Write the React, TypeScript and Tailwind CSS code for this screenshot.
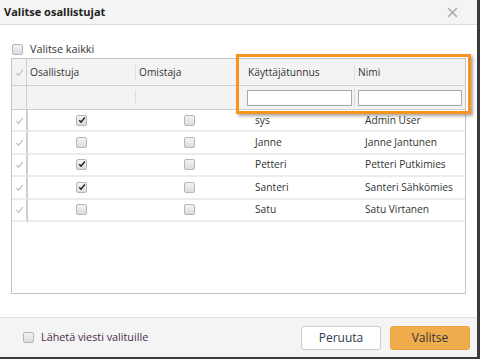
import React from "react";

const Check = ({ checked }: { checked?: boolean }) => (
  <span className="relative inline-block w-[11px] h-[11px] rounded-[2px] border border-[#b5b5b5] bg-gradient-to-b from-[#f4f4f4] to-[#dcdcdc]">
    {checked && (
      <svg viewBox="0 0 10 10" className="absolute left-[1px] top-[0px] w-[8px] h-[8px]">
        <path d="M1.5 5.2 L3.8 7.6 L8.5 1.8" stroke="#222" strokeWidth="1.8" fill="none" />
      </svg>
    )}
  </span>
);

const Tick = () => (
  <svg viewBox="0 0 10 10" className="w-[9px] h-[9px]">
    <path d="M1.5 5.5 L4 8 L8.8 2" stroke="#c4c4c4" strokeWidth="1.5" fill="none" />
  </svg>
);

const rows = [
  { o: true, u: "sys", n: "Admin User" },
  { o: false, u: "Janne", n: "Janne Jantunen" },
  { o: true, u: "Petteri", n: "Petteri Putkimies" },
  { o: true, u: "Santeri", n: "Santeri Sähkömies" },
  { o: false, u: "Satu", n: "Satu Virtanen" },
];

export default function App() {
  return (
    <div
      className="w-[480px] h-[359px] bg-[#3a3a3a] overflow-hidden text-[10.2px] text-[#222]"
      style={{ fontFamily: '"Open Sans", "Noto Sans", sans-serif' }}
    >
      <div className="w-[477px] h-[357px] bg-white flex flex-col">
        {/* header */}
        <div className="h-[25px] shrink-0 bg-[#f3f4f3] border-b border-[#dcdcdc] flex items-center justify-between pl-[4px] pr-[19px]">
          <span className="font-bold text-[11px] text-[#222]">Valitse osallistujat</span>
          <svg viewBox="0 0 10 10" className="w-[11px] h-[11px]">
            <path d="M1 1 L9 9 M9 1 L1 9" stroke="#b0b0b0" strokeWidth="1.4" />
          </svg>
        </div>

        {/* body */}
        <div className="flex-1 flex flex-col pl-[11px] pr-[11px]">
          <label className="flex items-center gap-[7px] mt-[18px] h-[12px] pl-[1px]">
            <Check />
            <span className="text-[#333] text-[10.8px]">Valitse kaikki</span>
          </label>

          <div className="relative mt-[3px] w-[455px] h-[236px] border border-[#c3c3c3]">
            {/* header row */}
            <div className="grid grid-cols-[15px_108px_105px_114px_1fr] h-[27px] bg-[#f3f3f3] border-b border-[#cfcfcf]">
              <div className="border-r border-[#cfcfcf] flex items-center justify-center">
                <Tick />
              </div>
              <div className="flex items-center pl-[3px] text-[#333]">Osallistuja</div>
              <div className="flex items-center pl-[3px] text-[#333] border-l border-[#dedede] my-[6px]">Omistaja</div>
              <div className="flex items-center pl-[8px] text-[#333]">Käyttäjätunnus</div>
              <div className="flex items-center pl-[3px] text-[#333] border-l border-[#dedede] my-[6px]">Nimi</div>
            </div>
            {/* filter row */}
            <div className="grid grid-cols-[15px_108px_105px_114px_1fr] h-[24px] bg-[#f3f3f3] border-b border-[#cfcfcf]">
              <div className="border-r border-[#cfcfcf]" />
              <div />
              <div className="border-l border-[#dedede] my-[5px]" />
              <div className="flex items-center pl-[7px] pr-[2px]">
                <div className="w-full h-[16px] bg-white border border-[#a9a9a9]" />
              </div>
              <div className="flex items-center pl-[3px] pr-[3px] border-l border-[#dedede] my-[3px]">
                <div className="w-full h-[16px] bg-white border border-[#a9a9a9]" />
              </div>
            </div>
            {/* data rows */}
            {rows.map((r) => (
              <div
                key={r.u}
                className="grid grid-cols-[15px_108px_105px_114px_1fr] h-[22.4px] border-b-2 border-[#ececec]"
              >
                <div className="border-r border-[#cfcfcf] flex items-center justify-center">
                  <Tick />
                </div>
                <div className="flex items-center justify-center">
                  <Check checked={r.o} />
                </div>
                <div className="flex items-center justify-center pl-[4px]">
                  <Check />
                </div>
                <div className="flex items-center pl-[15px] text-[#333]">{r.u}</div>
                <div className="flex items-center pl-[11px] text-[#333]">{r.n}</div>
              </div>
            ))}
            <div className="absolute left-[15px] top-[51px] w-px h-[113px] bg-[#cfcfcf]" />

            {/* orange highlight */}
            <div className="absolute left-[224px] top-[-5px] w-[235px] h-[60px] border-[3px] border-[#f7941d] shadow-[2px_2px_3px_rgba(0,0,0,0.35)]" />
          </div>
        </div>

        {/* footer */}
        <div className="h-[40px] shrink-0 bg-[#f3f4f3] border-t border-[#e2e2e2] flex items-center justify-between pl-[23px] pr-[7px]">
          <label className="flex items-center gap-[7px]">
            <Check />
            <span className="text-[#4a2b4a] text-[10.8px]">Lähetä viesti valituille</span>
          </label>
          <div className="flex gap-[9px]">
            <button className="w-[80px] h-[24px] bg-white border border-[#cccccc] rounded-[3px] text-[12px] text-[#2d3a4a]">
              Peruuta
            </button>
            <button className="w-[80px] h-[24px] bg-[#f0ad4e] border border-[#eea236] rounded-[3px] text-[12px] text-[#333]">
              Valitse
            </button>
          </div>
        </div>
      </div>
    </div>
  );
}
